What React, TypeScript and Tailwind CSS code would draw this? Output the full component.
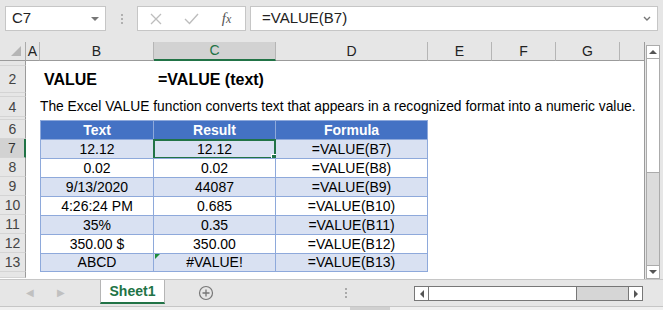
import React from "react";

const cols = [
  { k: "A", w: 14 },
  { k: "B", w: 114 },
  { k: "C", w: 122 },
  { k: "D", w: 152 },
  { k: "E", w: 64 },
  { k: "F", w: 64 },
  { k: "G", w: 64 },
  { k: "", w: 24 },
];

const data = [
  ["12.12", "12.12", "=VALUE(B7)"],
  ["0.02", "0.02", "=VALUE(B8)"],
  ["9/13/2020", "44087", "=VALUE(B9)"],
  ["4:26:24 PM", "0.685", "=VALUE(B10)"],
  ["35%", "0.35", "=VALUE(B11)"],
  ["350.00 $", "350.00", "=VALUE(B12)"],
  ["ABCD", "#VALUE!", "=VALUE(B13)"],
];

function RowHead({ n, h, label, active }: { n: number; h: number; label?: boolean; active?: boolean }) {
  return (
    <div
      className={
        "w-[26px] shrink-0 flex items-center justify-center border-b border-[#d4d4d4] text-[14px] leading-none " +
        (active ? "bg-[#d2d2d2] border-r-2 border-r-[#217346] text-[#333]" : "bg-[#e6e6e6] border-r border-r-[#9b9b9b] text-[#444]")
      }
      style={{ height: h }}
    >
      {label ? n : null}
    </div>
  );
}

function Filler() {
  return <div className="flex-1" />;
}

export default function App() {
  return (
    <div className="w-[663px] h-[310px] bg-[#e6e6e6] overflow-hidden flex flex-col font-['Liberation_Sans',sans-serif] text-[#222]">
      {/* formula bar */}
      <div className="h-[42px] shrink-0 flex items-start pt-[6px] pl-[5px]">
        <div className="w-[101px] h-[25px] bg-white border border-[#c6c6c6] flex items-center pl-[6px] pr-[6px] text-[15px]">
          <span className="flex-1">C7</span>
          <span className="w-0 h-0 border-l-[4px] border-r-[4px] border-t-[4px] border-l-transparent border-r-transparent border-t-[#777]" />
        </div>
        <div className="w-[31px] h-[25px] flex flex-col items-center justify-center gap-[2px]">
          <span className="w-[2px] h-[2px] bg-[#b0b0b0]" />
          <span className="w-[2px] h-[2px] bg-[#b0b0b0]" />
          <span className="w-[2px] h-[2px] bg-[#b0b0b0]" />
        </div>
        <div className="w-[109px] h-[25px] bg-white border border-[#c6c6c6] flex items-center">
          <svg width="36" height="25" viewBox="0 0 36 25" className="shrink-0">
            <path d="M13 8 L23 18 M23 8 L13 18" stroke="#bdbdbd" strokeWidth="1.3" fill="none" />
          </svg>
          <svg width="36" height="25" viewBox="0 0 36 25" className="shrink-0">
            <path d="M11 13 L15.5 17.5 L24 8" stroke="#bdbdbd" strokeWidth="1.4" fill="none" />
          </svg>
          <span className="flex-1 text-center font-['Liberation_Serif',serif] italic text-[15px] text-[#555] pr-[2px]">
            f<span className="text-[12px]">x</span>
          </span>
        </div>
        <div className="ml-[4px] w-[408px] h-[25px] bg-white border border-[#c6c6c6] flex items-center pl-[11px] pr-[5px] text-[15px]">
          <span className="flex-1">=VALUE(B7)</span>
          <svg width="10" height="8" viewBox="0 0 10 8">
            <path d="M2 2 L5 5 L8 2" stroke="#777" strokeWidth="1.4" fill="none" />
          </svg>
        </div>
      </div>

      {/* sheet + vertical scrollbar */}
      <div className="flex h-[237px] shrink-0">
        <div className="w-[645px] shrink-0 flex flex-col border-r border-[#9b9b9b] bg-white">
          {/* column header */}
          <div className="flex h-[19px] shrink-0 bg-[#e6e6e6]">
            <div className="w-[26px] shrink-0 border-b border-[#9b9b9b] border-r border-r-[#ababab] flex items-end justify-end pr-[4px] pb-[4px]">
              <span className="w-0 h-0" style={{ borderBottom: "10px solid #b5b5b5", borderLeft: "10px solid transparent" }} />
            </div>
            {cols.map((c, i) => (
              <div
                key={i}
                className={
                  "shrink-0 flex items-center justify-center text-[14px] text-[#222] " +
                  (c.k ? "border-r border-r-[#b5b5b5] " : "") +
                  (c.k === "C" ? "bg-[#d2d2d2] border-b-2 border-b-[#217346] text-[#217346]" : "border-b border-b-[#9b9b9b]")
                }
                style={{ width: c.w }}
              >
                {c.k}
              </div>
            ))}
          </div>

          {/* row 1 */}
          <div className="flex h-[5px]">
            <RowHead n={1} h={5} />
            <Filler />
          </div>
          {/* row 2 */}
          <div className="flex h-[27px] items-stretch">
            <RowHead n={2} h={27} label />
            <div className="w-[14px] shrink-0" />
            <div className="w-[114px] shrink-0 flex items-center pl-[4px] font-bold text-[16px] text-black whitespace-nowrap">VALUE</div>
            <div className="w-[122px] shrink-0 flex items-center pl-[4px] font-bold text-[16px] text-black whitespace-nowrap">=VALUE (text)</div>
            <Filler />
          </div>
          {/* row 3 */}
          <div className="flex h-[4px]">
            <RowHead n={3} h={4} />
            <Filler />
          </div>
          {/* row 4 */}
          <div className="flex h-[20px] items-stretch">
            <RowHead n={4} h={20} label />
            <div className="w-[14px] shrink-0" />
            <div className="w-[114px] shrink-0 flex items-center text-[13.8px] text-black whitespace-nowrap overflow-visible">
              The Excel VALUE function converts text that appears in a recognized format into a numeric value.
            </div>
            <Filler />
          </div>
          {/* row 5 */}
          <div className="flex h-[3px]">
            <RowHead n={5} h={3} />
            <Filler />
          </div>
          {/* row 6 table header */}
          <div className="flex h-[19px] items-stretch">
            <RowHead n={6} h={19} label />
            <div className="w-[14px] shrink-0" />
            {["Text", "Result", "Formula"].map((t, i) => (
              <div
                key={t}
                className={
                  "shrink-0 flex items-center justify-center bg-[#4472c4] text-white font-bold text-[14px] border-t border-r border-[#8ea9db] " +
                  (i === 0 ? "border-l" : "")
                }
                style={{ width: [114, 122, 152][i] }}
              >
                {t}
              </div>
            ))}
            <Filler />
          </div>
          {/* data rows */}
          {data.map((r, ri) => {
            const n = 7 + ri;
            const band = ri % 2 === 0 ? "bg-[#d9e1f2]" : "bg-white";
            return (
              <div key={n} className="flex h-[19px] items-stretch">
                <RowHead n={n} h={19} label active={n === 7} />
                <div className="w-[14px] shrink-0" />
                {r.map((v, ci) => (
                  <div
                    key={ci}
                    className={
                      "relative shrink-0 flex items-center justify-center text-[14px] text-black border-t border-r border-[#8ea9db] " +
                      band +
                      (ci === 0 ? " border-l" : "") +
                      (n === 13 ? " border-b" : "")
                    }
                    style={{ width: [114, 122, 152][ci] }}
                  >
                    {v}
                    {n === 7 && ci === 1 && (
                      <>
                        <div className="absolute -left-[1px] -top-[1px] -right-[1px] -bottom-[1px] border-2 border-[#217346]" />
                        <div className="absolute -right-[3px] -bottom-[3px] w-[5px] h-[5px] bg-[#217346] border border-white box-content" />
                      </>
                    )}
                    {n === 13 && ci === 1 && (
                      <div
                        className="absolute left-[1px] top-0 w-0 h-0"
                        style={{ borderTop: "5px solid #1e8c3a", borderRight: "5px solid transparent" }}
                      />
                    )}
                  </div>
                ))}
                <Filler />
              </div>
            );
          })}
          {/* row 14 */}
          <div className="flex h-[6px]">
            <RowHead n={14} h={6} />
            <Filler />
          </div>
        </div>

        {/* vertical scrollbar */}
        <div className="w-[18px] shrink-0 pt-[3px] pl-[1px]">
          <div className="w-[14px] h-[234px] border border-[#ababab] bg-[#dcdcdc] flex flex-col">
            <div className="h-[13px] bg-white border-b border-[#ababab] flex items-center justify-center">
              <span className="w-0 h-0" style={{ borderBottom: "4px solid #555", borderLeft: "4px solid transparent", borderRight: "4px solid transparent" }} />
            </div>
            <div className="h-[114px] bg-white border-b border-[#ababab]" />
            <div className="flex-1" />
            <div className="h-[13px] bg-white border-t border-[#ababab] flex items-center justify-center">
              <span className="w-0 h-0" style={{ borderTop: "4px solid #555", borderLeft: "4px solid transparent", borderRight: "4px solid transparent" }} />
            </div>
          </div>
        </div>
      </div>

      {/* sheet tabs */}
      <div className="h-[27px] shrink-0 flex items-start border-t border-[#c6c6c6] bg-[#e6e6e6]">
        <div className="w-[100px] h-[25px] flex items-center pl-[26px] gap-[23px] text-[#c0c0c0] text-[10px]">
          <span>◀</span>
          <span>▶</span>
        </div>
        <div className="w-[65px] h-[24px] bg-white border-l border-r border-[#b5b5b5] border-b-2 border-b-[#217346] flex items-center justify-center text-[14px] font-bold text-[#217346]">
          Sheet1
        </div>
        <div className="w-[82px] h-[25px] flex items-center justify-center">
          <svg width="16" height="16" viewBox="0 0 16 16">
            <circle cx="8" cy="8" r="6.5" stroke="#777" strokeWidth="1.2" fill="none" />
            <path d="M8 4.5 V11.5 M4.5 8 H11.5" stroke="#777" strokeWidth="1.3" />
          </svg>
        </div>
        <div className="w-[167px] h-[25px] flex items-center justify-center">
          <div className="flex flex-col gap-[2px] ml-[30px]">
            <span className="w-[2px] h-[2px] bg-[#aaa]" />
            <span className="w-[2px] h-[2px] bg-[#aaa]" />
            <span className="w-[2px] h-[2px] bg-[#aaa]" />
          </div>
        </div>
        <div className="mt-[6px] w-[229px] h-[15px] border border-[#777] bg-[#d6d6d6] flex">
          <div className="w-[14px] bg-white border-r border-[#777] flex items-center justify-center">
            <span className="w-0 h-0" style={{ borderRight: "4px solid #555", borderTop: "4px solid transparent", borderBottom: "4px solid transparent" }} />
          </div>
          <div className="w-[148px] bg-white border-r border-[#777]" />
          <div className="flex-1" />
          <div className="w-[14px] bg-white border-l border-[#777] flex items-center justify-center">
            <span className="w-0 h-0" style={{ borderLeft: "4px solid #555", borderTop: "4px solid transparent", borderBottom: "4px solid transparent" }} />
          </div>
        </div>
      </div>

      {/* status strip */}
      <div className="flex-1 border-t border-[#c6c6c6] bg-[#f0f0f0] flex">
        <div className="ml-[350px] w-[40px] bg-[#d0d0d0]" />
      </div>
    </div>
  );
}
